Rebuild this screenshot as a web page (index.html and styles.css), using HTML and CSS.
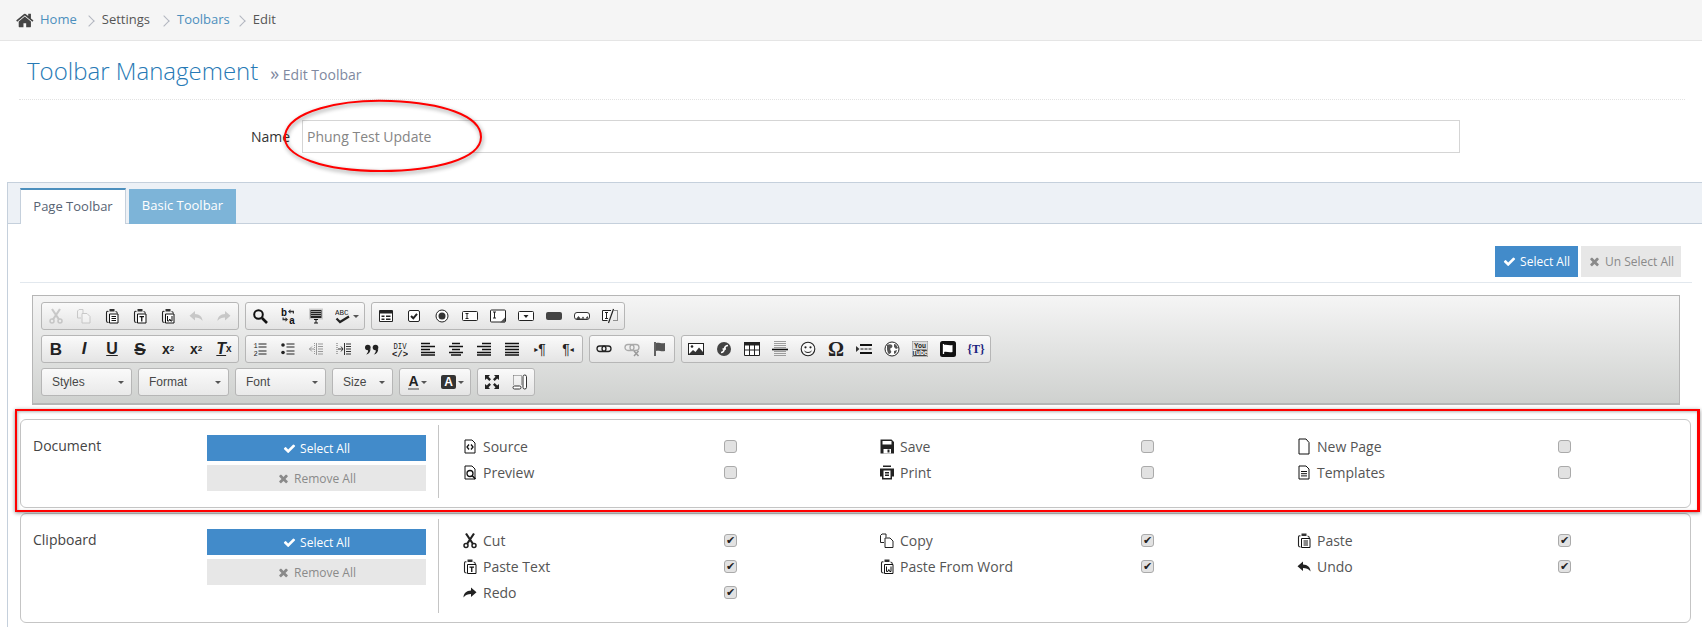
FILE: index.html
```html
<!DOCTYPE html>
<html lang="en">
<head>
<meta charset="utf-8">
<title>Toolbar Management</title>
<link rel="stylesheet" href="styles.css">
</head>
<body>
<svg class="sprite" aria-hidden="true">
<defs>
<symbol id="home" viewBox="0 0 1792 1792"><path d="M1408 992v480q0 26-19 45t-45 19h-384v-384h-256v384h-384q-26 0-45-19t-19-45v-480q0-1 .5-3t.5-3l575-474 575 474q1 2 1 6zm223-69l-62 74q-8 9-21 11h-3q-13 0-21-7l-692-577-692 577q-12 8-24 7-13-2-21-11l-62-74q-8-10-7-23.500t11-21.500l719-599q32-26 76-26t76 26l244 204v-195q0-14 9-23t23-9h192q14 0 23 9t9 23v408l219 182q10 8 11 21.500t-7 23.500z"/></symbol>
<symbol id="check" viewBox="0 0 1792 1792"><path d="M1671 566q0 40-28 68l-724 724-136 136q-28 28-68 28t-68-28l-136-136-362-362q-28-28-28-68t28-68l136-136q28-28 68-28t68 28l294 295 656-657q28-28 68-28t68 28l136 136q28 28 28 68z"/></symbol>
<symbol id="times" viewBox="0 0 1792 1792"><path d="M1490 1322q0 40-28 68l-136 136q-28 28-68 28t-68-28l-294-294-294 294q-28 28-68 28t-68-28l-136-136q-28-28-28-68t28-68l294-294-294-294q-28-28-28-68t28-68l136-136q28-28 68-28t68 28l294 294 294-294q28-28 68-28t68 28l136 136q28 28 28 68t-28 68l-294 294 294 294q28 28 28 68z"/></symbol>

<symbol id="source" viewBox="0 0 16 16"><path d="M3 1.500h7l3 3v10H3z" fill="#fff" stroke="#111"/><path d="M7 6 5 8.500 7 11M9 6l2 2.500L9 11" fill="none" stroke="#111" stroke-width="1.300"/></symbol>
<symbol id="save" viewBox="0 0 16 16"><path d="M1.500 1h11L15 3.500V15H1.500z" fill="#222"/><path d="M3.500 2.500h9V6h-9z" fill="#fff"/><path d="M4.500 10.500h7.500V15H4.500z" fill="#fff"/><path d="M8.500 11h2v3h-2z" fill="#222"/></symbol>
<symbol id="newpage" viewBox="0 0 16 16"><path d="M3 .5h7l3 3.500v11.500H3z" fill="#fff" stroke="#111"/></symbol>
<symbol id="preview" viewBox="0 0 16 16"><path d="M3 1.500h7l3 3v10H3z" fill="#fff" stroke="#111"/><circle cx="8" cy="9" r="3" fill="none" stroke="#111" stroke-width="1.300"/><path d="M10 11l3.500 3.500" stroke="#111" stroke-width="1.600"/></symbol>
<symbol id="print" viewBox="0 0 16 16"><path d="M4 1h8v1.500H4z" fill="#222"/><path d="M1 4h14v8h-2v3H3v-3H1z" fill="#222"/><path d="M4.500 6h7v7.500h-7z" fill="#fff"/><path d="M6 7.500h4V9H6zM6 10h4v1.500H6z" fill="#222"/></symbol>
<symbol id="templates" viewBox="0 0 16 16"><path d="M3 1.500h7l3 3v10H3z" fill="#fff" stroke="#111"/><path d="M5 7h6M5 9.200h6M5 11.400h6" stroke="#111"/></symbol>
<symbol id="cut" viewBox="0 0 16 16"><circle cx="4" cy="13" r="2" fill="none" stroke="currentColor" stroke-width="1.500"/><circle cx="12" cy="13" r="2" fill="none" stroke="currentColor" stroke-width="1.500"/><path d="M5 11.500 12 1M11 11.500 4 1" stroke="currentColor" stroke-width="2.200" fill="none"/></symbol>
<symbol id="copy" viewBox="0 0 16 16"><path d="M7 5V1.500H3L1.500 3v7H5" fill="none" stroke="currentColor"/><path d="M6 5.500h5l3 3v6.500H6z" fill="#fff" fill-opacity=".5" stroke="currentColor"/></symbol>
<symbol id="paste" viewBox="0 0 16 16"><path d="M4.500 3.500C3 3 2.500 3.500 2.500 5v8c0 1 .8 1.500 2 1.500" fill="none" stroke="#222" stroke-width="1.100"/><path d="M11.500 3.500c1.200 0 1.800.3 1.800 2" fill="none" stroke="#222" stroke-width="1.100"/><path d="M5.500 1h5v2.500h-5z" fill="#333"/><path d="M5.500 6h8.500v9H5.500z" fill="#fff" stroke="#111"/><path d="M7.500 8.500h4.500M7.500 10.500h4.500M7.500 12.500h4.500" stroke="#111"/></symbol>
<symbol id="pastetext" viewBox="0 0 16 16"><path d="M4.500 3.500C3 3 2.500 3.500 2.500 5v8c0 1 .8 1.500 2 1.500" fill="none" stroke="#222" stroke-width="1.100"/><path d="M11.500 3.500c1.200 0 1.800.3 1.800 2" fill="none" stroke="#222" stroke-width="1.100"/><path d="M5.500 1h5v2.500h-5z" fill="#333"/><path d="M5.500 6h8.500v9H5.500z" fill="#fff" stroke="#111"/><path d="M7.500 8h4.500v1.200h-1.600v4.300H9.100V9.200H7.500z" fill="#111"/></symbol>
<symbol id="pasteword" viewBox="0 0 16 16"><path d="M4.500 3.500C3 3 2.500 3.500 2.500 5v8c0 1 .8 1.500 2 1.500" fill="none" stroke="#222" stroke-width="1.100"/><path d="M11.500 3.500c1.200 0 1.800.3 1.800 2" fill="none" stroke="#222" stroke-width="1.100"/><path d="M5.500 1h5v2.500h-5z" fill="#333"/><path d="M5.500 6h8.500v9H5.500z" fill="#fff" stroke="#111"/><path d="M7.500 8v5h1.400l.9-2 .9 2h1.300V8" fill="none" stroke="#111"/></symbol>
<symbol id="undo" viewBox="0 0 16 16"><path d="M7 3 1.500 7.700 7 12.500V9.500c3 0 5.500.5 7.500 3.500C14.500 9 11.500 6 7 6z" fill="currentColor"/></symbol>
<symbol id="redo" viewBox="0 0 16 16"><path d="M9 3l5.500 4.700L9 12.500V9.500c-3 0-5.500.5-7.500 3.500C1.500 9 4.500 6 9 6z" fill="currentColor"/></symbol>
<symbol id="find" viewBox="0 0 16 16"><circle cx="6.500" cy="6.500" r="4.300" fill="none" stroke="#111" stroke-width="2"/><path d="M10 10l5 5" stroke="#111" stroke-width="2.600"/></symbol>
<symbol id="replace" viewBox="0 0 16 16"><text x="1" y="8" font-size="10" font-family="Liberation Mono" font-weight="700" fill="#111">b</text><text x="9" y="16" font-size="10" font-family="Liberation Mono" font-weight="700" fill="#111">a</text><path d="M8 3.500l2.500-2.300v1.600H14v2.700h-1.200V4.200h-2.300v1.600zM8 11.500 5.500 13.800v-1.600H2.500V9.500h1.200v1.300h1.800V9.200z" fill="#333"/></symbol>
<symbol id="selectall" viewBox="0 0 16 16"><path d="M1 .5h14v11H1z" fill="#ccc"/><path d="M2.500 2h11v8h-11z" fill="#222"/><path d="M3 3.500h10M3 5.500h10M3 7.500h10" stroke="#bbb" stroke-width=".8"/><path d="M6 11.500h4M8 11.500v3.500M6 15h4" stroke="#111"/></symbol>
<symbol id="spell" viewBox="0 0 16 16"><text x="0" y="7" font-size="7.500" font-family="Liberation Mono" fill="#222">ABC</text><path d="M1.500 10.500l3.500 3.500L14 8.500" fill="none" stroke="#222" stroke-width="2.200"/></symbol>
<symbol id="form" viewBox="0 0 16 16"><path d="M1.500 2.500h13v11h-13z" fill="#fff" stroke="#222"/><path d="M2 3h12v2.500H2zM3.500 7.500h3V9h-3zM8 7.500h4.500V9H8zM3.500 10.500h3V12h-3zM8 10.500h4.500V12H8z" fill="#222"/></symbol>
<symbol id="checkbox" viewBox="0 0 16 16"><rect x="2.500" y="2.500" width="11" height="11" rx="1.500" fill="#fff" stroke="#222"/><path d="M5 8l2.300 2.300L11 5.800" fill="none" stroke="#222" stroke-width="2"/></symbol>
<symbol id="radio" viewBox="0 0 16 16"><circle cx="8" cy="8" r="6" fill="#fff" stroke="#222"/><circle cx="8" cy="8" r="3.500" fill="#333"/></symbol>
<symbol id="textfield" viewBox="0 0 16 16"><rect x=".5" y="3.500" width="15" height="9" rx="1" fill="#fff" stroke="#222"/><path d="M3.500 5.500h3M5 5.500v5M3.500 10.500h3" stroke="#222"/></symbol>
<symbol id="textarea" viewBox="0 0 16 16"><rect x=".5" y="2" width="15" height="12" rx="1" fill="#fff" stroke="#222"/><path d="M3 4h3M4.500 4v6M3 10h3" stroke="#222"/><path d="M15 9.500v5h-5z" fill="#555"/></symbol>
<symbol id="select" viewBox="0 0 16 16"><rect x=".5" y="3.500" width="15" height="9" rx="1" fill="#fff" stroke="#222"/><path d="M5.500 7h5L8 10z" fill="#222"/></symbol>
<symbol id="button" viewBox="0 0 16 16"><rect x="0" y="4" width="16" height="8" rx="2" fill="#444"/></symbol>
<symbol id="imagebutton" viewBox="0 0 16 16"><rect x=".5" y="4.500" width="15" height="7" rx="2.500" fill="#fff" stroke="#333"/><path d="M2 11l2.500-3 2.500 3 2-2.500 2 2.500 2.500-3 1 2.500" fill="#444"/></symbol>
<symbol id="hiddenfield" viewBox="0 0 16 16"><path d="M9 2.500H.5v10h5" fill="#fff" stroke="#222"/><path d="M3 4.500h3M4.500 4.500v6M3 10.500h3" stroke="#222"/><path d="M11.500 1 6.500 15" stroke="#222" stroke-width="1.200"/><path d="M12.500 2.500h3v10h-5" fill="none" stroke="#333" stroke-dasharray="1 1"/></symbol>
<symbol id="numbered" viewBox="0 0 16 16"><text x="1.500" y="7" font-size="7" font-family="Liberation Mono" fill="#222">1</text><text x="1.500" y="14.500" font-size="7" font-family="Liberation Mono" fill="#222">2</text><path d="M6.500 3h8M6.500 6h8M6.500 10h8M6.500 13h8" stroke="#222" stroke-width="1.100"/></symbol>
<symbol id="bulleted" viewBox="0 0 16 16"><circle cx="3" cy="4" r="1.800" fill="#222"/><circle cx="3" cy="11.500" r="1.800" fill="#222"/><path d="M6.500 3h8M6.500 6h8M6.500 10h8M6.500 13h8" stroke="#222" stroke-width="1.100"/></symbol>
<symbol id="outdent" viewBox="0 0 16 16"><path d="M8.500 2v12M1 8h5M4 5.500 1.500 8 4 10.500M10 3h5M10 5.500h5M10 8h5M10 10.500h5M10 13h5" stroke="#999" fill="none"/><path d="M6.500 2v12" stroke="#999" stroke-dasharray="1 1"/></symbol>
<symbol id="indent" viewBox="0 0 16 16"><path d="M8.500 2v12M2 8h5M5 5.500 7 8 5 10.500M10 3h5M10 5.500h5M10 8h5M10 10.500h5M10 13h5" stroke="#333" fill="none"/><path d="M1 2v12" stroke="#666" stroke-dasharray="1 1"/></symbol>
<symbol id="quote" viewBox="0 0 16 16"><circle cx="3.800" cy="6.500" r="2.800" fill="#222"/><path d="M4 9c.6 1.800-.8 3.500-2 4.500 2.800-.4 4.500-2.400 4.500-5.500z" fill="#222"/><circle cx="11.500" cy="6.500" r="2.800" fill="#222"/><path d="M11.700 9c.6 1.800-.8 3.500-2 4.500 2.800-.4 4.500-2.400 4.500-5.500z" fill="#222"/></symbol>
<symbol id="div" viewBox="0 0 16 16"><text x="8" y="7.500" text-anchor="middle" font-size="8.500" font-family="Liberation Mono" textLength="13" lengthAdjust="spacingAndGlyphs" fill="#222">DIV</text><text x="8" y="15.500" text-anchor="middle" font-size="9" font-weight="700" font-family="Liberation Mono" fill="#222">&lt;/&gt;</text></symbol>
<symbol id="left" viewBox="0 0 16 16"><path d="M1 2.500h9M1 5.500h14M1 8.500h9M1 11.500h14M1 14h14" stroke="#111" stroke-width="1.400"/></symbol>
<symbol id="center" viewBox="0 0 16 16"><path d="M4 2.500h8M1 5.500h14M4 8.500h8M1 11.500h14M3 14h10" stroke="#111" stroke-width="1.400"/></symbol>
<symbol id="right" viewBox="0 0 16 16"><path d="M6 2.500h9M1 5.500h14M6 8.500h9M1 11.500h14M1 14h14" stroke="#111" stroke-width="1.400"/></symbol>
<symbol id="justify" viewBox="0 0 16 16"><path d="M1 2.500h14M1 5.500h14M1 8.500h14M1 11.500h14M1 14h14" stroke="#111" stroke-width="1.400"/></symbol>
<symbol id="link" viewBox="0 0 16 16"><rect x="1" y="5" width="9" height="5.500" rx="2.700" fill="none" stroke="#222" stroke-width="1.300"/><rect x="6" y="5" width="9" height="5.500" rx="2.700" fill="none" stroke="#222" stroke-width="1.300"/></symbol>
<symbol id="unlink" viewBox="0 0 16 16"><rect x="1" y="3.500" width="9" height="6" rx="3" fill="none" stroke="#aaa" stroke-width="1.300"/><rect x="6" y="3.500" width="9" height="6" rx="3" fill="none" stroke="#aaa" stroke-width="1.300"/><path d="M10 10l4.500 5M14.500 10 10 15" stroke="#999" stroke-width="1.500"/></symbol>
<symbol id="anchor" viewBox="0 0 16 16"><path d="M3 1v14" stroke="#333" stroke-width="1.500"/><path d="M4 2c3-1 5 1 9 0v8c-4 1-6-1-9 0z" fill="#555"/></symbol>
<symbol id="image" viewBox="0 0 16 16"><rect x=".5" y="2.500" width="15" height="11" fill="#fff" stroke="#222"/><circle cx="4" cy="5.500" r="1.300" fill="#222"/><path d="M1 13l4-4 2.500 2 3.500-4.500L15 11v2.500H1z" fill="#333"/></symbol>
<symbol id="flash" viewBox="0 0 16 16"><circle cx="8" cy="8" r="7" fill="#444"/><path d="M5 11.500c2.500 0 3-1.500 3.500-4S10 4.500 12 4.500M6.500 8h3.500" fill="none" stroke="#fff" stroke-width="1.500"/></symbol>
<symbol id="table" viewBox="0 0 16 16"><path d="M0 1.500h16V15H0z" fill="#fff"/><path d="M0 1h16v3.500H0z" fill="#222"/><path d="M.5 4v10.500h15V4M5.500 4v10.500M10.500 4v10.500M.5 9h15" fill="none" stroke="#222"/></symbol>
<symbol id="hr" viewBox="0 0 16 16"><path d="M2 .5h12M2 2.500h12M2 4.500h12M2 6.500h12M2 10.500h12M2 12.500h12M2 14.500h12" stroke="#888" stroke-width=".8"/><path d="M0 8.500h16" stroke="#111" stroke-width="1.600"/></symbol>
<symbol id="smiley" viewBox="0 0 16 16"><circle cx="8" cy="8" r="6.800" fill="#fff" fill-opacity=".6" stroke="#222" stroke-width="1.100"/><circle cx="5.500" cy="6.300" r="1.100" fill="#222"/><circle cx="10.500" cy="6.300" r="1.100" fill="#222"/><path d="M4.500 10c1 2 6 2 7 0" fill="none" stroke="#222"/></symbol>
<symbol id="pagebreak" viewBox="0 0 16 16"><path d="M0 5l3.500 3L0 11z" fill="#333"/><path d="M4 3h12v2H4zM4 11h12v2H4z" fill="#111"/><path d="M4.500 8h11" stroke="#222" stroke-dasharray="3 1"/></symbol>
<symbol id="iframe" viewBox="0 0 16 16"><circle cx="8" cy="8" r="7" fill="#fff" stroke="#222"/><path d="M3 4c2-1 4-1 5 0s0 3-1 3-1 2 0 3-1 3-2 3-2-4-2-5zM10 3c2 0 3 2 4 4l-2 1-2-2zM10 10l3-1-1 3-2 1z" fill="#555"/></symbol>
<symbol id="youtube" viewBox="0 0 16 16"><rect x="0" y="0" width="16" height="16" rx="1.500" fill="#ddd" stroke="#777" stroke-width=".8"/><rect x="1" y="8.500" width="14" height="6.500" rx="1" fill="#444"/><text x="8" y="7" text-anchor="middle" font-size="6.500" font-weight="700" font-family="Liberation Sans" fill="#222">You</text><text x="8" y="14" text-anchor="middle" font-size="6.500" font-weight="700" font-family="Liberation Sans" fill="#fff">Tube</text></symbol>
<symbol id="docprops" viewBox="0 0 16 16"><rect x="0" y="0" width="16" height="16" rx="2.500" fill="#111"/><path d="M3.500 3v10" stroke="#fff" stroke-width="1.300"/><path d="M4 4c3-.8 5 1 8.500 0v7c-3.500 1-5.500-.8-8.500 0z" fill="#fff"/></symbol>
<symbol id="maximize" viewBox="0 0 16 16"><path d="M1 1h5L4.500 2.800 7 5.300 5.300 7 2.800 4.500 1 6zM15 1v5l-1.800-1.500L10.700 7 9 5.300l2.500-2.500L10 1zM1 15v-5l1.800 1.500L5.300 9 7 10.700l-2.500 2.500L6 15zM15 15h-5l1.500-1.800L9 10.700 10.700 9l2.500 2.500L15 10z" fill="#222"/></symbol>
<symbol id="showblocks" viewBox="0 0 16 16"><path d="M1.500 1.500h8v9" fill="none" stroke="#666" stroke-dasharray="1 1"/><path d="M1.500 1.500v9" fill="none" stroke="#666" stroke-dasharray="1 1"/><rect x="1" y="12" width="8" height="3" rx="1.500" fill="#fff" stroke="#333"/><rect x="11" y="1" width="3.500" height="14" rx="1.700" fill="#fff" stroke="#333"/></symbol>
</defs>
</svg>

<nav class="crumbs">
  <svg class="ic-home"><use href="#home"/></svg>
  <a class="crumb crumb-link" href="#">Home</a><i class="sep"></i>
  <span class="crumb crumb-settings">Settings</span><i class="sep"></i>
  <a class="crumb crumb-link crumb-tools" href="#">Toolbars</a><i class="sep"></i>
  <span class="crumb">Edit</span>
</nav>

<header class="page-header">
  <h1>Toolbar Management</h1>
  <small><span class="raquo">»</span> Edit Toolbar</small>
</header>

<div class="name-row">
  <label class="name-label" for="tb-name">Name</label>
  <input class="name-input" id="tb-name" type="text" value="Phung Test Update">
</div>

<section class="tabbox">
  <div class="tabbar">
    <div class="tab tab-on">Page Toolbar</div>
    <div class="tab tab-off">Basic Toolbar</div>
  </div>
  <div class="tabbody">
    <div class="actions">
      <button class="btn btn-blue btn-top"><svg class="fa"><use href="#check"/></svg>Select All</button>
      <button class="btn btn-grey btn-top"><svg class="fa"><use href="#times"/></svg>Un Select All</button>
    </div>

    <div class="cke">
      <div class="cke-row">
        <div class="grp">
          <span class="b off"><svg><use href="#cut"/></svg></span><span class="b off"><svg><use href="#copy"/></svg></span><span class="b"><svg><use href="#paste"/></svg></span><span class="b"><svg><use href="#pastetext"/></svg></span><span class="b"><svg><use href="#pasteword"/></svg></span><span class="b off"><svg><use href="#undo"/></svg></span><span class="b off"><svg><use href="#redo"/></svg></span>
        </div>
        <div class="grp">
          <span class="b"><svg><use href="#find"/></svg></span><span class="b"><svg><use href="#replace"/></svg></span><span class="b"><svg><use href="#selectall"/></svg></span><span class="b b-wide"><svg><use href="#spell"/></svg><i class="caret"></i></span>
        </div>
        <div class="grp">
          <span class="b"><svg><use href="#form"/></svg></span><span class="b"><svg><use href="#checkbox"/></svg></span><span class="b"><svg><use href="#radio"/></svg></span><span class="b"><svg><use href="#textfield"/></svg></span><span class="b"><svg><use href="#textarea"/></svg></span><span class="b"><svg><use href="#select"/></svg></span><span class="b"><svg><use href="#button"/></svg></span><span class="b"><svg><use href="#imagebutton"/></svg></span><span class="b"><svg><use href="#hiddenfield"/></svg></span>
        </div>
      </div>
      <div class="cke-row">
        <div class="grp">
          <span class="b t t-b">B</span><span class="b t t-i">I</span><span class="b t t-u">U</span><span class="b t t-s">S</span><span class="b t t-x">x<sub>2</sub></span><span class="b t t-x">x<sup>2</sup></span><span class="b t t-c"><span class="t-cu">T</span><sub>x</sub></span>
        </div>
        <div class="grp">
          <span class="b"><svg><use href="#numbered"/></svg></span><span class="b"><svg><use href="#bulleted"/></svg></span><span class="b"><svg><use href="#outdent"/></svg></span><span class="b"><svg><use href="#indent"/></svg></span><span class="b"><svg><use href="#quote"/></svg></span><span class="b"><svg><use href="#div"/></svg></span><span class="b"><svg><use href="#left"/></svg></span><span class="b"><svg><use href="#center"/></svg></span><span class="b"><svg><use href="#right"/></svg></span><span class="b"><svg><use href="#justify"/></svg></span><span class="b t t-dir"><small>▸</small>¶</span><span class="b t t-dir">¶<small>◂</small></span>
        </div>
        <div class="grp">
          <span class="b"><svg><use href="#link"/></svg></span><span class="b"><svg><use href="#unlink"/></svg></span><span class="b"><svg><use href="#anchor"/></svg></span>
        </div>
        <div class="grp">
          <span class="b"><svg><use href="#image"/></svg></span><span class="b"><svg><use href="#flash"/></svg></span><span class="b"><svg><use href="#table"/></svg></span><span class="b"><svg><use href="#hr"/></svg></span><span class="b"><svg><use href="#smiley"/></svg></span><span class="b t t-om">Ω</span><span class="b"><svg><use href="#pagebreak"/></svg></span><span class="b"><svg><use href="#iframe"/></svg></span><span class="b"><svg><use href="#youtube"/></svg></span><span class="b"><svg><use href="#docprops"/></svg></span><span class="b t t-tpl">{T}</span>
        </div>
      </div>
      <div class="cke-row">
        <div class="grp combo combo-l">Styles<i class="caret"></i></div>
        <div class="grp combo combo-l">Format<i class="caret"></i></div>
        <div class="grp combo combo-l">Font<i class="caret"></i></div>
        <div class="grp combo combo-s">Size<i class="caret"></i></div>
        <div class="grp">
          <span class="b b-col"><span class="t-a">A</span><i class="caret"></i></span><span class="b b-col"><span class="t-ab">A</span><i class="caret"></i></span>
        </div>
        <div class="grp">
          <span class="b"><svg><use href="#maximize"/></svg></span><span class="b"><svg><use href="#showblocks"/></svg></span>
        </div>
      </div>
    </div>

    <div class="panel panel-doc">
      <div class="p-label">Document</div>
      <div class="p-btns">
        <button class="btn btn-blue btn-wide"><svg class="fa"><use href="#check"/></svg>Select All</button>
        <button class="btn btn-grey btn-wide"><svg class="fa"><use href="#times"/></svg>Remove All</button>
      </div>
      <div class="p-items">
        <label class="item"><svg class="it"><use href="#source"/></svg><span class="it-name">Source</span><input type="checkbox"></label>
        <label class="item"><svg class="it"><use href="#save"/></svg><span class="it-name">Save</span><input type="checkbox"></label>
        <label class="item"><svg class="it"><use href="#newpage"/></svg><span class="it-name">New Page</span><input type="checkbox"></label>
        <label class="item"><svg class="it"><use href="#preview"/></svg><span class="it-name">Preview</span><input type="checkbox"></label>
        <label class="item"><svg class="it"><use href="#print"/></svg><span class="it-name">Print</span><input type="checkbox"></label>
        <label class="item"><svg class="it"><use href="#templates"/></svg><span class="it-name">Templates</span><input type="checkbox"></label>
      </div>
    </div>

    <div class="panel panel-clip">
      <div class="p-label">Clipboard</div>
      <div class="p-btns">
        <button class="btn btn-blue btn-wide"><svg class="fa"><use href="#check"/></svg>Select All</button>
        <button class="btn btn-grey btn-wide"><svg class="fa"><use href="#times"/></svg>Remove All</button>
      </div>
      <div class="p-items">
        <label class="item"><svg class="it"><use href="#cut"/></svg><span class="it-name">Cut</span><input type="checkbox" checked></label>
        <label class="item"><svg class="it"><use href="#copy"/></svg><span class="it-name">Copy</span><input type="checkbox" checked></label>
        <label class="item"><svg class="it"><use href="#paste"/></svg><span class="it-name">Paste</span><input type="checkbox" checked></label>
        <label class="item"><svg class="it"><use href="#pastetext"/></svg><span class="it-name">Paste Text</span><input type="checkbox" checked></label>
        <label class="item"><svg class="it"><use href="#pasteword"/></svg><span class="it-name">Paste From Word</span><input type="checkbox" checked></label>
        <label class="item"><svg class="it"><use href="#undo"/></svg><span class="it-name">Undo</span><input type="checkbox" checked></label>
        <label class="item"><svg class="it"><use href="#redo"/></svg><span class="it-name">Redo</span><input type="checkbox" checked></label>
      </div>
    </div>
  </div>
</section>

<svg class="note-ellipse" viewBox="0 0 210 85" aria-hidden="true"><path d="M110 2C60 0 8 12 4 36c-3 22 40 36 96 36 54 0 100-12 100-34C200 16 160 4 110 2z"/></svg>
<div class="note-rect"></div>
</body>
</html>
```
FILE: styles.css
```css
* { box-sizing: border-box; }
html, body { margin: 0; height: 627px; overflow: hidden; }
body { position: relative; background: #fff; color: #393939; font: 13px/1.5 "Open Sans", sans-serif; }
.sprite { position: absolute; width: 0; height: 0; }

.crumbs { display: flex; align-items: center; height: 41px; padding-left: 16px; background: #f5f5f5; border-bottom: 1px solid #e5e5e5; color: #555; }
.ic-home { width: 19px; height: 19px; margin-right: 5px; fill: #444; }
.crumb { color: #555; text-decoration: none; }
.crumb-link { color: #4c8fbd; }
.crumb-settings { margin-right: 2px; }
.crumb-tools { margin-right: -2px; }
.sep { width: 25px; height: 7px; position: relative; }
.sep::after { content: ""; position: absolute; left: 8px; top: 0; width: 7px; height: 7px; border-top: 1px solid #b2b6bf; border-right: 1px solid #b2b6bf; transform: rotate(45deg); }

.page-header { display: flex; align-items: baseline; height: 59px; margin: 0 17px 0 19px; padding: 6px 0 0 8px; border-bottom: 1px dotted #e2e2e2; }
.page-header h1 { margin: 0; font-size: 24px; font-weight: 300; line-height: 48px; color: #2679b5; }
.page-header small { margin-left: 12px; font-size: 14px; color: #8089a0; }
.raquo { font-size: 18px; line-height: 1; }

.name-row { display: flex; align-items: center; height: 33px; margin-top: 20px; padding-left: 251px; }
.name-label { width: 51px; color: #333; font-size: 14px; }
.name-input { width: 1158px; height: 33px; padding: 0 4px; border: 1px solid #d5d5d5; color: #858585; font: 14px "Open Sans", sans-serif; background: #fff; }

.tabbox { margin: 29px 0 0 7px; border: 1px solid #c5d0dc; border-right: 0; border-bottom: 0; height: 460px; }
.tabbar { display: flex; gap: 3px; height: 41px; padding: 5px 0 0 12px; background: #edf1f6; border-bottom: 1px solid #c5d0dc; }
.tab { height: 35px; font-size: 13px; line-height: 33px; text-align: center; }
.tab-on { width: 106px; height: 36px; background: #fff; color: #576373; border: 1px solid #c5d0dc; border-top: 2px solid #4c8fbd; border-bottom: 0; }
.tab-off { width: 107px; background: #7db4d8; color: #fff; margin-top: 1px; }

.tabbody { padding: 0 10px 0 12px; }
.actions { display: flex; justify-content: flex-end; gap: 3px; height: 59px; padding: 22px 11px 0 0; border-bottom: 1px solid #e2e8ee; }
.btn { display: flex; align-items: center; justify-content: center; border: 0; padding: 0; font: 12px "Open Sans", sans-serif; }
.btn .fa { width: 13px; height: 13px; margin-right: 4px; fill: currentColor; }
.btn-blue { background: #428bca; color: #fff; }
.btn-grey { background: #e7e7e7; color: #8a8a8a; }
.btn-top { height: 31px; }
.btn-top.btn-blue { width: 83px; }
.btn-top.btn-grey { width: 100px; }
.btn-wide { width: 219px; height: 26px; }

.cke { width: 1648px; height: 110px; margin: 12px 0 0 12px; padding: 6px 8px 0; display: flex; flex-direction: column; gap: 5px; background: linear-gradient(#f5f5f5, #cfd1cf); border: 1px solid #b6b6b6; border-bottom-width: 2px; }
.cke-row { display: flex; gap: 6px; height: 28px; }
.grp { display: flex; border: 1px solid #b6b6b6; border-radius: 3px; background: linear-gradient(#fafafa, #e4e4e4); height: 28px; }
.b { display: flex; align-items: center; justify-content: center; width: 28px; height: 26px; color: #222; }
.b svg { width: 16px; height: 16px; }
.b.off { color: #a8a8a8; opacity: .55; }
.b-wide { width: 34px; gap: 2px; }
.caret { display: block; width: 0; height: 0; border: 3px solid transparent; border-top-color: #555; border-bottom: 0; }
.t { font-family: "Liberation Sans", sans-serif; color: #222; line-height: 1; }
.t-b { font-size: 17px; font-weight: 700; }
.t-i { font: italic 700 17px "Liberation Sans", sans-serif; }
.t-u { font-size: 16px; font-weight: 700; text-decoration: underline; }
.t-s { font-size: 17px; font-weight: 700; text-decoration: line-through; text-decoration-thickness: 2px; }
.t-x { font-size: 14px; font-weight: 700; }
.t-x sub, .t-x sup { font-size: 8px; line-height: 0; }
.t-c { font: italic 700 16px "Liberation Sans", sans-serif; }
.t-cu { text-decoration: underline; }
.t-c sub { font-style: normal; font-size: 10px; line-height: 0; }
.t-dir { font-size: 14px; font-weight: 400; }
.t-dir small { font: 8px "DejaVu Sans", sans-serif; }
.t-om { font: 700 20px "Liberation Serif", serif; }
.t-tpl { font: 700 12px "Liberation Serif", serif; color: #1a237e; }
.combo { align-items: center; justify-content: space-between; padding: 0 7px 0 10px; color: #474747; font: 12px "Liberation Sans", sans-serif; background: linear-gradient(#fafafa, #e9e9e9); }
.combo-l { width: 91px; }
.combo-s { width: 61px; }
.b-col { width: 35px; gap: 2px; }
.t-a { font: 700 14px "Liberation Sans", sans-serif; color: #222; border-bottom: 2px solid #999; line-height: 14px; }
.t-ab { font: 700 12px "Liberation Sans", sans-serif; color: #fff; background: #333; border-radius: 2px; padding: 0 3px; line-height: 14px; }

.panel { display: flex; width: 1671px; padding: 5px 12px 9px; border: 1px solid #c5c5c5; border-radius: 6px; }
.panel-doc { margin-top: 14px; height: 89px; }
.panel-clip { margin-top: 5px; height: 110px; }
.p-label { flex: none; width: 174px; margin-top: 8px; line-height: 26px; font-size: 14px; color: #444; }
.p-btns { flex: none; display: flex; flex-direction: column; gap: 4px; width: 219px; margin: 10px 12px 0 0; }
.p-items { flex: 1; min-width: 0; display: grid; grid-template-columns: 417px 417px 1fr; grid-auto-rows: 26px; align-content: start; padding: 8px 0 0 23px; border-left: 1px solid #c5c5c5; }
.item { display: flex; align-items: center; font-size: 14px; color: #555; }
.it { flex: none; width: 16px; height: 17px; margin-right: 5px; color: #222; }
.it-name { flex: none; width: 241px; }
.item input { appearance: none; flex: none; position: relative; width: 13px; height: 13px; margin: 0; background: #e2e2e2; border: 1px solid #aaa; border-radius: 3px; }
.item input:checked::after { content: "✔"; position: absolute; inset: 0; font: 11px/11px "DejaVu Sans", sans-serif; text-align: center; color: #222; }

.note-ellipse { position: absolute; left: 281px; top: 99px; width: 210px; height: 85px; overflow: visible; fill: none; stroke: #f00; stroke-width: 2; filter: drop-shadow(1px 2px 2px rgba(0, 0, 0, .45)); }
.note-rect { position: absolute; left: 15px; top: 409px; width: 1685px; height: 103px; border: solid #f00; border-width: 2px 3px 2px 2px; box-shadow: 0 1px 4px rgba(0, 0, 0, .45), inset 1px 1px 3px rgba(0, 0, 0, .3); }
```
